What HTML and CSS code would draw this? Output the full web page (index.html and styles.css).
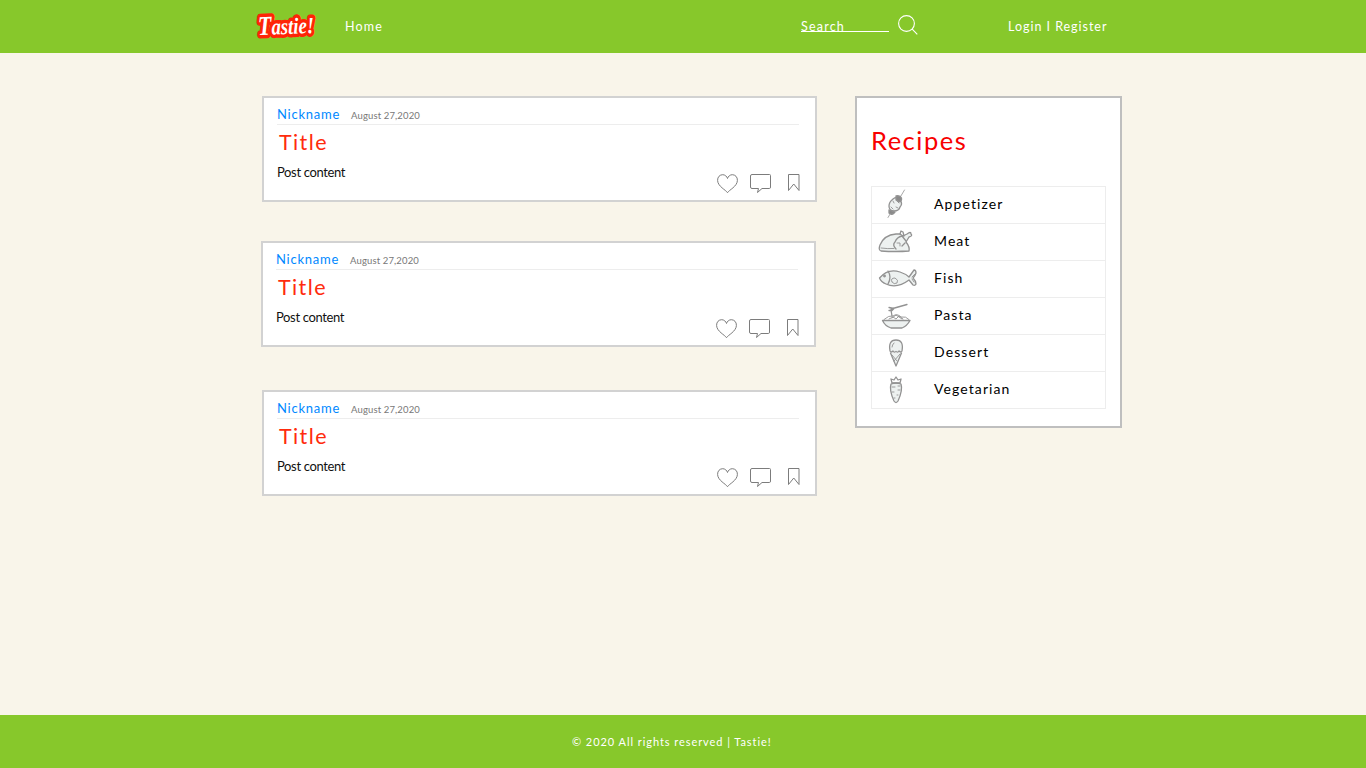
FILE: index.html
```html
<!DOCTYPE html>
<html lang="en">
<head>
<meta charset="utf-8">
<title>Tastie!</title>
<link rel="stylesheet" href="styles.css">
</head>
<body>
<svg class="defs" aria-hidden="true">
  <symbol id="heart" viewBox="0 0 22 20"><path d="M10.500 18.700C9 16 .8 12.500 .6 6.500C.4 3 2.800 .7 5.700 .7C8 .7 10 2.500 10.500 4.500C11 2.500 13 .7 15.300 .7C18.200 .7 20.600 3 20.400 6.500C20.200 12.500 12 16 10.500 18.700Z"/></symbol>
  <symbol id="comment" viewBox="0 0 22 20"><path d="M2 .5H19.500Q20.500 .5 20.500 1.500V13Q20.500 14.500 19.500 14.500H12L7.500 18.500L8.500 14.500H2Q.5 14.500 .5 13V2Q.5 .5 2 .5Z"/></symbol>
  <symbol id="bookmark" viewBox="0 0 12 18"><path d="M.5 .5H11V16.500L5.750 10L.5 16.500Z"/></symbol>
</svg>
<header class="topbar">
  <div class="bar-inner">
    <svg class="logo" viewBox="0 0 64 30"><text x="4" y="23" textLength="56" lengthAdjust="spacingAndGlyphs" transform="rotate(-2 32 15)"><tspan class="cap">T</tspan>astie!</text></svg>
    <a class="home">Home</a>
    <div class="search"><span>Search</span></div>
    <svg class="glass" viewBox="0 0 20 20"><circle cx="8.500" cy="8.500" r="7.900"/><path d="M14.200 14.200L19.300 19.300"/></svg>
    <a class="login">Login I Register</a>
  </div>
</header>
<main class="content">
  <section class="feed">
    <article class="post">
      <div class="meta"><a class="nick">Nickname</a><time>August 27,2020</time></div>
      <h2>Title</h2>
      <p>Post content</p>
      <div class="actions"><svg class="heart"><use href="#heart"/></svg><svg class="comment"><use href="#comment"/></svg><svg class="bookmark"><use href="#bookmark"/></svg></div>
    </article>
    <article class="post shifted">
      <div class="meta"><a class="nick">Nickname</a><time>August 27,2020</time></div>
      <h2>Title</h2>
      <p>Post content</p>
      <div class="actions"><svg class="heart"><use href="#heart"/></svg><svg class="comment"><use href="#comment"/></svg><svg class="bookmark"><use href="#bookmark"/></svg></div>
    </article>
    <article class="post">
      <div class="meta"><a class="nick">Nickname</a><time>August 27,2020</time></div>
      <h2>Title</h2>
      <p>Post content</p>
      <div class="actions"><svg class="heart"><use href="#heart"/></svg><svg class="comment"><use href="#comment"/></svg><svg class="bookmark"><use href="#bookmark"/></svg></div>
    </article>
  </section>
  <aside class="recipes">
    <h1>Recipes</h1>
    <ul>
      <li><svg viewBox="0 0 50 36"><path class="thin" d="M16 30.500L32.500 3"/><path class="pale" d="M21 12Q25 9 28 13Q31 17 28 20Q27 24 22 24Q17 24 17 19Q17 15 21 12Z"/><path class="soft" d="M21 14L22 16M25 14L27 16M19 20L21 22M24 20L26 21"/><path class="dark" d="M17 23L23 25Q20 29 17 26ZM24 9Q28 8 29.500 11Q30 14 27 15L24 13Z"/></svg><span>Appetizer</span></li>
      <li><svg viewBox="0 0 50 36"><path class="pale" d="M9 27Q6 26 8 21Q12 11 24 10L28 10L31 12L35 10Q39 7 39 10Q41 12 37 13L34 18Q38 23 37 27Q24 28 9 27Z"/><path d="M24 25Q20 21 23 18Q25 13 30 12L34 17M28 10L29 7L31 8L32 12M30 22L33 19"/><path class="soft" d="M9 24Q16 25 22 24.500M25 19H28V22"/></svg><span>Meat</span></li>
      <li><svg viewBox="0 0 50 36"><path class="pale" d="M7.500 17Q16 7 28 11Q34 13 37 16L42 9Q44 9 44 12Q43 15 41 17Q44 20 44 23Q43 25 41 24L37 19Q25 28 14 23Q9 21 7.500 17Z"/><path d="M16 10Q20 16 16 23"/><path class="soft" d="M20 21Q18 17 23 17Q27 19 25 22Q22 24 20 21M40 16L43 13M40 18L42 21"/><circle cx="12.500" cy="15" r=".8"/></svg><span>Fish</span></li>
      <li><svg viewBox="0 0 50 36"><path class="pale" d="M10.500 22.500H38Q35 28 30 30H19Q13 28 10.500 22.500Z"/><path d="M19 11L35 6.500M17 9.500L22 10.500L20 12.500H17M19 12L20 18"/><path class="soft" d="M12 21.500Q17 17 21 18Q25 15 29 19Q34 18 37 21.500M17 21L21 19L24 21L27 18L31 21M20 20L24 17L30 21"/></svg><span>Pasta</span></li>
      <li><svg viewBox="0 0 50 36"><path class="pale" d="M18.500 18L24 31L29.500 18"/><path class="pale" d="M18 16Q16 5 24 5Q32 5 30 16Q29 18 27 16Q26 18 24 16.500Q22 18 21 16Q19 18 18 16Z"/><path class="soft" d="M20 20L25 26M28 19L22 26M22 8Q20 10 20 12"/></svg><span>Dessert</span></li>
      <li><svg viewBox="0 0 50 36"><path class="pale" d="M19 12Q24 10 29 12Q31 18 26 29Q24 32 22 29Q17 18 19 12Z"/><path d="M20 11L19 7L22 8L24 5L26 8L29 7L28 11Z"/><path class="soft" d="M20 15H23M26 18H28M20 20H22M25 23H26M22 26H23M26 14H28"/></svg><span>Vegetarian</span></li>
    </ul>
  </aside>
</main>
<footer class="footer"><span>© 2020 All rights reserved | Tastie!</span></footer>
</body>
</html>
```

FILE: styles.css
```css
* { box-sizing: border-box; }
body { margin: 0; height: 768px; display: flex; flex-direction: column; background: #f9f5ea; font-family: Lato, "Noto Sans", sans-serif; color: #111; overflow: hidden; }
svg { flex: none; fill: none; }
span, a, time, h1, h2, p { white-space: nowrap; }
.defs { display: none; }
.topbar { height: 53px; background: #87c82b; color: #fff; }
.bar-inner { display: flex; align-items: flex-start; margin-left: 254px; font-size: 12.5px; line-height: 16px; }
.logo { width: 64px; height: 30px; margin-top: 11px; overflow: visible; }
.logo text { font: italic bold 23px "Liberation Serif", serif; fill: #fff; stroke: #ff2407; stroke-width: 7px; stroke-linejoin: round; paint-order: stroke; }
.logo .cap { font-size: 27px; }
.home { width: 60px; margin: 19px 0 0 27px; letter-spacing: 1.2px; }
.search { width: 88px; height: 13px; margin: 19px 0 0 396px; border-bottom: 1px solid #fff; letter-spacing: 1.2px; }
.glass { width: 20px; height: 20px; margin: 15px 0 0 9px; stroke: #fff; stroke-width: 1.1; }
.login { margin: 19px 0 0 90px; letter-spacing: .97px; }
.content { flex: 1; display: flex; align-items: flex-start; gap: 38px; padding: 43px 0 0 262px; }
.feed { width: 555px; display: flex; flex-direction: column; }
.post { width: 555px; height: 106px; margin-bottom: 43px; padding: 8px 16px 0 13px; border: 2px solid #d2d2d2; background: #fff; display: grid; grid-template-columns: 1fr auto; grid-template-rows: 19px 36px 32px; }
.post:first-child { margin-bottom: 39px; }
.shifted { margin-left: -1px; }
.meta { grid-column: 1 / 3; display: flex; align-items: baseline; gap: 10px; border-bottom: 1px solid #ededed; line-height: 17px; }
.nick { width: 64px; color: #0088ff; font-size: 13px; letter-spacing: .75px; }
time { color: #777; font-size: 9.5px; letter-spacing: .14px; }
h2 { grid-column: 1 / 3; margin: 4px 0 0 2px; color: #ff2b0d; font-size: 21.5px; line-height: 26px; font-weight: 400; letter-spacing: 1.4px; }
p { margin: 3px 0 0; font-size: 13px; line-height: 17px; letter-spacing: -.36px; }
.actions { display: flex; align-items: flex-start; margin: 13px -1px 0 0; stroke: #7c7c7c; stroke-width: 1; }
.heart, .comment { width: 22px; height: 20px; }
.comment { margin-left: 11px; }
.bookmark { width: 12px; height: 18px; margin-left: 16px; }
.recipes { width: 267px; height: 332px; padding: 25px 14px 0; border: 2px solid #bfbfbf; background: #fff; }
h1 { margin: 0; height: 63px; color: #f80000; font-size: 25.5px; line-height: 34px; font-weight: 400; letter-spacing: 1.5px; }
ul { margin: 0; padding: 0; list-style: none; border: 1px solid #ededed; }
li { height: 37px; display: flex; border-bottom: 1px solid #ededed; font-size: 14px; line-height: 34px; letter-spacing: 1.1px; color: #000; }
li:last-child { height: 36px; border-bottom: 0; }
li svg { width: 50px; height: 36px; margin-right: 12px; stroke: #929292; stroke-width: 1.3; stroke-linejoin: round; stroke-linecap: round; }
.pale { fill: #edf1f0; }
.dark { fill: #8a8a8a; }
.soft { stroke-width: .9; }
.thin { stroke-width: .8; }
.footer { height: 53px; padding: 18px 0 0 572px; background: #87c82b; color: #fff; font-size: 11px; line-height: 18px; letter-spacing: .94px; }
```
